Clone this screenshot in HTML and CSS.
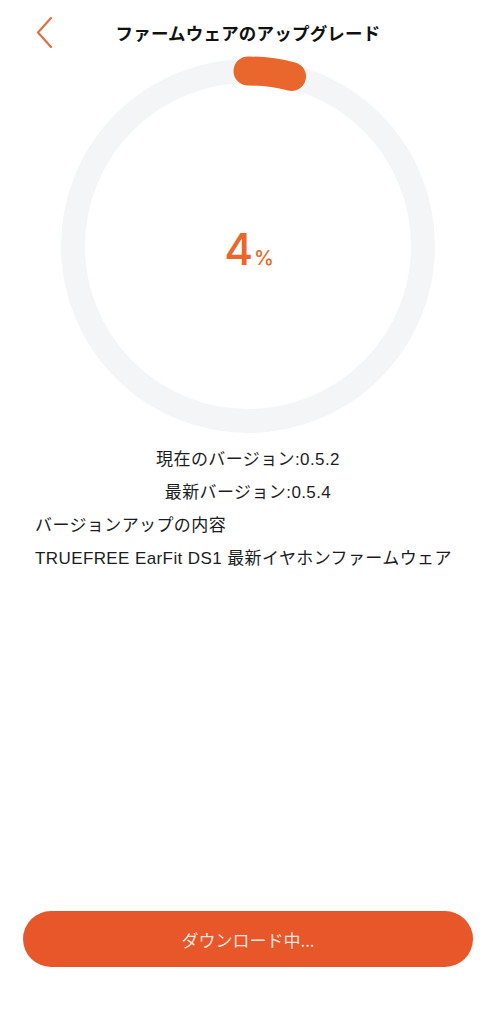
FILE: index.html
```html
<!DOCTYPE html>
<html>
<head>
  <meta charset="utf-8">
  <title>ファームウェアのアップグレード</title>
  <link rel="stylesheet" href="styles.css">
</head>
<body>
  <div class="page">
    <header class="nav">
      <span class="back">
        <svg width="18" height="32" viewBox="0 0 18 32">
          <path d="M16 2 L3 16.5 L16 31" fill="none" stroke="#e2703e" stroke-width="2.2" stroke-linecap="round" stroke-linejoin="round"/>
        </svg>
      </span>
      <h1 class="title">ファームウェアのアップグレード</h1>
      <span></span>
    </header>

    <div class="progress">
      <svg class="ring" width="380" height="380" viewBox="0 0 380 380">
        <circle cx="190" cy="190" r="175" fill="none" stroke="#f4f5f7" stroke-width="24"/>
        <path d="M190 15 A175 175 0 0 1 233.5 20.5" fill="none" stroke="#e9662c" stroke-width="29" stroke-linecap="round"/>
      </svg>
      <div class="percent"><span class="num">4</span><span class="unit">%</span></div>
    </div>

    <div class="info">
      <p class="center">現在のバージョン:0.5.2</p>
      <p class="center">最新バージョン:0.5.4</p>
      <p>バージョンアップの内容</p>
      <p>TRUEFREE EarFit DS1 最新イヤホンファームウェア</p>
    </div>

    <button class="download" type="button">ダウンロード中...</button>
  </div>
</body>
</html>
```

FILE: styles.css
```css
body { margin: 0; background: #fff; color: #1c1c1e; font-family: "Liberation Sans", "Noto Sans CJK JP", sans-serif; }
.page { display: flex; flex-direction: column; min-height: 1024px; box-sizing: border-box; padding-bottom: 57px; }
.nav { display: grid; grid-template-columns: 80px 1fr 80px; align-items: center; height: 56px; margin-top: 4px; margin-bottom: -4px; }
.back { display: flex; padding-left: 35px; }
.title { margin: 0; text-align: center; font-size: 17.5px; font-weight: bold; letter-spacing: 0.2px; color: #111; }
.progress { display: grid; justify-items: center; align-items: center; }
.ring, .percent { grid-area: 1 / 1; }
.percent { color: #e9662c; font-family: Inter, Roboto, sans-serif; font-weight: 500; display: flex; align-items: baseline; margin-top: 6px; margin-left: 2px; }
.num { font-size: 44px; }
.unit { font-size: 20px; margin-left: 1px; }
.info { margin-top: 7px; padding: 0 35px; }
.info p { margin: 0; font-size: 17px; line-height: 33px; letter-spacing: 0.4px; color: #1c1c1e; white-space: nowrap; }
.info .center { text-align: center; }
.download { margin: auto 23px 0; height: 56px; border: none; border-radius: 28px; background: #e8572a; color: rgba(255,255,255,0.85); font-family: "Noto Sans CJK JP", sans-serif; font-size: 17px; cursor: pointer; }
```
